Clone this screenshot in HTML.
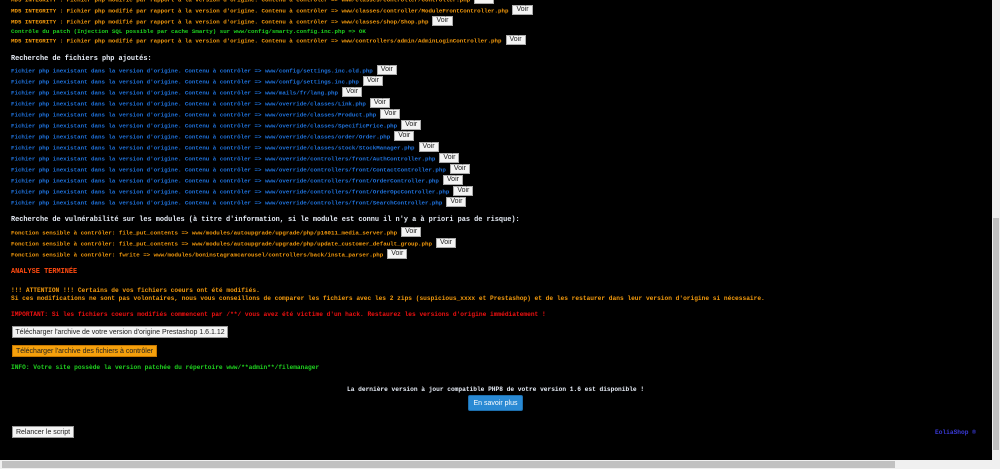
<!DOCTYPE html>
<html><head><meta charset="utf-8"><style>
html,body{margin:0;padding:0;}
body{width:1000px;height:469px;background:#000;position:relative;overflow:hidden;font-family:"Liberation Mono",monospace;font-size:5.8px;font-weight:bold;}
.l{position:absolute;left:11px;white-space:pre;line-height:10px;height:10px;}
.h{font-size:6.9px}.m{font-size:6.2px}
.o{color:#f49a0c}.g{color:#1fd31f}.b{color:#1f74e0}.w{color:#e8eef8}.r{color:#f01010}.ar{color:#ff4a10}
.v{display:inline-block;vertical-align:middle;margin-left:4px;background:#f4f4f4;border:1px solid #aaa;color:#222;font-family:"Liberation Sans",sans-serif;font-weight:normal;font-size:7px;line-height:8px;height:8px;padding:0 3px;position:relative;top:-1px}
.btn{position:absolute;font-family:"Liberation Sans",sans-serif;font-weight:normal;font-size:7px;box-sizing:border-box;display:flex;align-items:center;justify-content:center;white-space:nowrap}
</style></head><body>
<div class="l o" style="top:-5px">MD5 INTEGRITY : Fichier php modifié par rapport à la version d'origine. Contenu à contrôler => www/classes/controller/Controller.php<span class="v">Voir</span></div>
<div class="l o" style="top:6px">MD5 INTEGRITY : Fichier php modifié par rapport à la version d'origine. Contenu à contrôler => www/classes/controller/ModuleFrontController.php<span class="v">Voir</span></div>
<div class="l o" style="top:17px">MD5 INTEGRITY : Fichier php modifié par rapport à la version d'origine. Contenu à contrôler => www/classes/shop/Shop.php<span class="v">Voir</span></div>
<div class="l g" style="top:27px">Contrôle du patch (Injection SQL possible par cache Smarty) sur www/config/smarty.config.inc.php => OK</div>
<div class="l o" style="top:36px">MD5 INTEGRITY : Fichier php modifié par rapport à la version d'origine. Contenu à contrôler => www/controllers/admin/AdminLoginController.php<span class="v">Voir</span></div>
<div class="l w h" style="top:54px">Recherche de fichiers php ajoutés:</div>
<div class="l b" style="top:66px">Fichier php inexistant dans la version d'origine. Contenu à contrôler => www/config/settings.inc.old.php<span class="v">Voir</span></div>
<div class="l b" style="top:77px">Fichier php inexistant dans la version d'origine. Contenu à contrôler => www/config/settings.inc.php<span class="v">Voir</span></div>
<div class="l b" style="top:88px">Fichier php inexistant dans la version d'origine. Contenu à contrôler => www/mails/fr/lang.php<span class="v">Voir</span></div>
<div class="l b" style="top:99px">Fichier php inexistant dans la version d'origine. Contenu à contrôler => www/override/classes/Link.php<span class="v">Voir</span></div>
<div class="l b" style="top:110px">Fichier php inexistant dans la version d'origine. Contenu à contrôler => www/override/classes/Product.php<span class="v">Voir</span></div>
<div class="l b" style="top:121px">Fichier php inexistant dans la version d'origine. Contenu à contrôler => www/override/classes/SpecificPrice.php<span class="v">Voir</span></div>
<div class="l b" style="top:132px">Fichier php inexistant dans la version d'origine. Contenu à contrôler => www/override/classes/order/Order.php<span class="v">Voir</span></div>
<div class="l b" style="top:143px">Fichier php inexistant dans la version d'origine. Contenu à contrôler => www/override/classes/stock/StockManager.php<span class="v">Voir</span></div>
<div class="l b" style="top:154px">Fichier php inexistant dans la version d'origine. Contenu à contrôler => www/override/controllers/front/AuthController.php<span class="v">Voir</span></div>
<div class="l b" style="top:165px">Fichier php inexistant dans la version d'origine. Contenu à contrôler => www/override/controllers/front/ContactController.php<span class="v">Voir</span></div>
<div class="l b" style="top:176px">Fichier php inexistant dans la version d'origine. Contenu à contrôler => www/override/controllers/front/OrderController.php<span class="v">Voir</span></div>
<div class="l b" style="top:187px">Fichier php inexistant dans la version d'origine. Contenu à contrôler => www/override/controllers/front/OrderOpcController.php<span class="v">Voir</span></div>
<div class="l b" style="top:198px">Fichier php inexistant dans la version d'origine. Contenu à contrôler => www/override/controllers/front/SearchController.php<span class="v">Voir</span></div>
<div class="l w h" style="top:215px">Recherche de vulnérabilité sur les modules (à titre d'information, si le module est connu il n'y a à priori pas de risque):</div>
<div class="l o" style="top:228px">Fonction sensible à contrôler: file_put_contents => www/modules/autoupgrade/upgrade/php/p16011_media_server.php<span class="v">Voir</span></div>
<div class="l o" style="top:239px">Fonction sensible à contrôler: file_put_contents => www/modules/autoupgrade/upgrade/php/update_customer_default_group.php<span class="v">Voir</span></div>
<div class="l o" style="top:250px">Fonction sensible à contrôler: fwrite => www/modules/boninstagramcarousel/controllers/back/insta_parser.php<span class="v">Voir</span></div>
<div class="l ar h" style="top:267px">ANALYSE TERMINÉE</div>
<div class="l o m" style="top:286px">!!! ATTENTION !!! Certains de vos fichiers coeurs ont été modifiés.</div>
<div class="l o m" style="top:294px">Si ces modifications ne sont pas volontaires, nous vous conseillons de comparer les fichiers avec les 2 zips (suspicious_xxxx et Prestashop) et de les restaurer dans leur version d'origine si nécessaire.</div>
<div class="l r m" style="top:310px">IMPORTANT: Si les fichiers coeurs modifiés commencent par /**/ vous avez été victime d'un hack. Restaurez les versions d'origine immédiatement !</div>
<div class="btn" style="left:12px;top:326px;width:216px;height:12px;background:#f4f4f4;border:1px solid #999;color:#222">Télécharger l'archive de votre version d'origine Prestashop 1.6.1.12</div>
<div class="btn" style="left:12px;top:345px;width:145px;height:12px;background:#f5a00c;border:1px solid #c77800;color:#222">Télécharger l'archive des fichiers à contrôler</div>
<div class="l g m" style="top:363px">INFO: Votre site possède la version patchée du répertoire www/**admin**/filemanager</div>
<div class="l w m" style="top:385px;left:347px">La dernière version à jour compatible PHP8 de votre version 1.6 est disponible !</div>
<div class="btn" style="left:468px;top:395px;width:55px;height:16px;background:#2a8ad4;border:1px solid #1d6fae;color:#fff;border-radius:2px">En savoir plus</div>
<div class="btn" style="left:12px;top:426px;width:62px;height:12px;background:#f4f4f4;border:1px solid #999;color:#222">Relancer le script</div>
<div class="l m" style="top:428px;left:935px;color:#3a3ad8">EoliaShop ®</div>
<div style="position:absolute;left:992px;top:0;width:8px;height:460px;background:#f0f0f0"></div>
<div style="position:absolute;left:993px;top:218px;width:6px;height:232px;background:#c1c1c1"></div>
<div style="position:absolute;left:0;top:460px;width:1000px;height:9px;background:#f0f0f0"></div>
<div style="position:absolute;left:2px;top:461px;width:893px;height:7px;background:#c1c1c1"></div>
</body></html>
